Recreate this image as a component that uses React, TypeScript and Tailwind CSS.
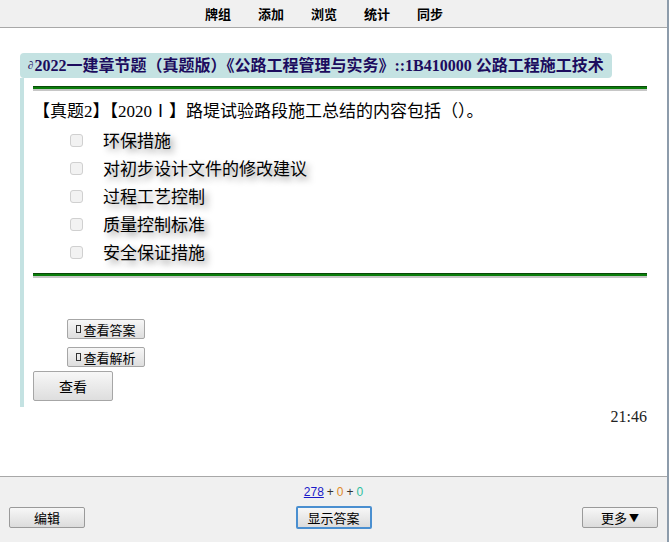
import React from "react";

const options = ["环保措施", "对初步设计文件的修改建议", "过程工艺控制", "质量控制标准", "安全保证措施"];
const nav = ["牌组", "添加", "浏览", "统计", "同步"];

function GreenLine() {
  return (
    <div className="w-full">
      <div className="h-[1px] bg-[#0a4a0a]" />
      <div className="h-[2px] bg-[#0b7d0b]" />
      <div className="h-[2px] bg-[#c6c6c6]" />
    </div>
  );
}

export default function App() {
  return (
    <div className="w-[669px] h-[542px] flex flex-col bg-white border-r-2 border-[#8d9cab] overflow-hidden [font-family:'Noto_Sans_CJK_SC',sans-serif]">
      {/* top nav */}
      <div className="h-[28px] shrink-0 bg-[#f0f0f0] border-b border-[#a8a8a8] flex items-center">
        <div className="ml-[205px] flex gap-[27px]">
          {nav.map((n) => (
            <span key={n} className="text-[13px] font-bold text-black leading-none">
              {n}
            </span>
          ))}
        </div>
      </div>

      {/* main */}
      <div className="flex-1 px-[20px] pt-[25px] flex flex-col">
        <div className="self-start h-[25px] px-[8px] rounded-[4px] bg-[#c4e2e2] flex items-center text-[16px] font-bold text-[#1c0c5e] [font-family:'Liberation_Serif','Noto_Sans_CJK_SC',serif] whitespace-nowrap">
          <span className="text-[11px] mr-[1px]">∂</span>2022一建章节题（真题版）《公路工程管理与实务》::1B410000 公路工程施工技术
        </div>
        <div className="border-l-4 border-[#c4e2e2] pl-[9px] pt-[8px] pb-[6px] flex flex-col">
          <GreenLine />
          <div className="mt-[7px] h-[28px] flex items-center text-[17px] text-black whitespace-nowrap [font-family:'Liberation_Serif','Noto_Sans_CJK_SC',serif]">
            【真题2】【2020Ⅰ】路堤试验路段施工总结的内容包括（）。
          </div>
          {options.map((o) => (
            <div key={o} className="h-[28px] flex items-center">
              <span className="ml-[37px] w-[13px] h-[13px] border border-[#d0d0d0] bg-[#f2f2f2] rounded-[3px] shrink-0" />
              <span className="ml-[20px] text-[17px] text-black [text-shadow:4px_4px_6px_#9c9c9c]">{o}</span>
            </div>
          ))}
          <div className="mt-[7px]">
            <GreenLine />
          </div>
          <div className="mt-[41px] ml-[34px] flex flex-col gap-[8px] items-start">
            {["查看答案", "查看解析"].map((t) => (
              <button
                key={t}
                className="w-[78px] h-[20px] flex items-center justify-center border border-[#a6a6a6] rounded-[2px] bg-linear-to-b from-[#f7f7f7] to-[#dedede] text-[13px] text-black leading-none"
              >
                <span className="inline-block w-[5px] h-[8px] border border-[#333] mr-[2px]" />
                {t}
              </button>
            ))}
          </div>
          <button className="mt-[4px] w-[80px] h-[30px] flex items-center justify-center border border-[#a6a6a6] rounded-[2px] bg-linear-to-b from-[#f7f7f7] to-[#dedede] text-[14px] text-black">
            查看
          </button>
        </div>
        <div className="text-right text-[16px] text-[#222] leading-[20px] [font-family:'Liberation_Serif',serif]">
          21:46
        </div>
      </div>

      {/* bottom bar */}
      <div className="h-[66px] shrink-0 bg-[#f0f0f0] border-t border-[#a8a8a8] flex flex-col">
        <div className="mt-[7px] h-[16px] flex items-center justify-center text-[12px] leading-none [font-family:'Liberation_Sans',sans-serif]">
          <span className="text-[#1a1ac8] underline">278</span>
          <span className="text-[#333] mx-[3px]">+</span>
          <span className="text-[#e08a2a]">0</span>
          <span className="text-[#333] mx-[3px]">+</span>
          <span className="text-[#2fbf9f]">0</span>
        </div>
        <div className="mt-[6px] px-[9px] flex justify-between items-center">
          <button className="w-[76px] h-[21px] flex items-center justify-center border border-[#9a9a9a] rounded-[2px] bg-linear-to-b from-[#f7f7f7] to-[#dcdcdc] text-[13px] text-black">
            编辑
          </button>
          <button className="w-[76px] h-[23px] flex items-center justify-center border-2 border-[#4a8fd0] rounded-[2px] bg-linear-to-b from-[#f7f7f7] to-[#dcdcdc] text-[13px] text-black">
            显示答案
          </button>
          <button className="w-[76px] h-[21px] flex items-center justify-center border border-[#9a9a9a] rounded-[2px] bg-linear-to-b from-[#f7f7f7] to-[#dcdcdc] text-[13px] text-black">
            更多<span className="ml-[2px] text-[10px]">▼</span>
          </button>
        </div>
      </div>
    </div>
  );
}
